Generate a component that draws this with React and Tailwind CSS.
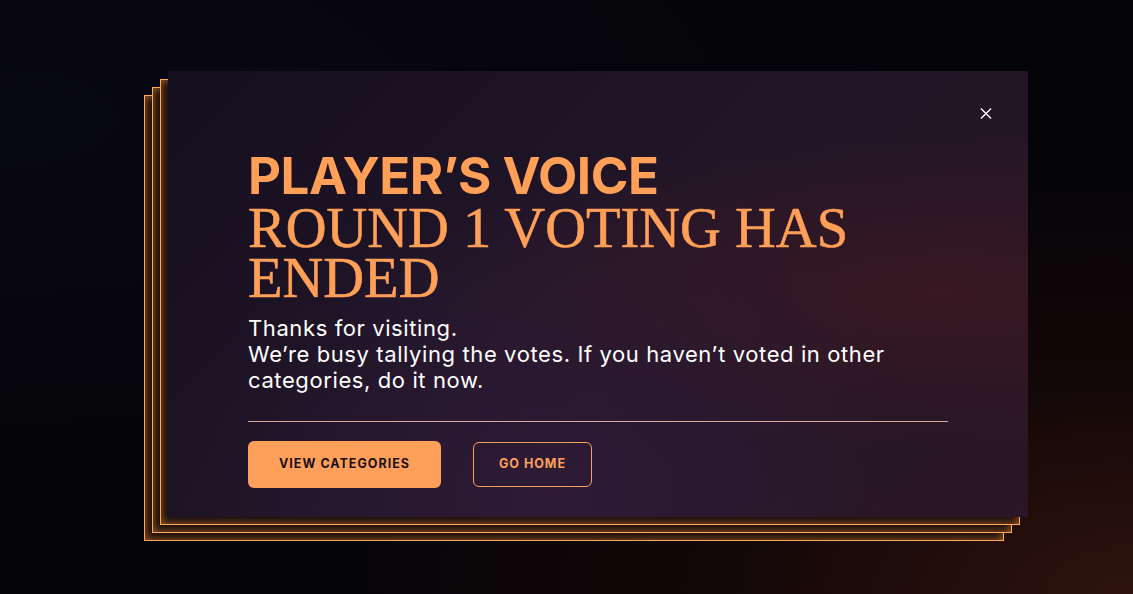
import React from "react";

const frameCls =
  "absolute inset-0 border-[1.5px] border-[#ffa85c] bg-[#1a0e0a] shadow-[inset_0_0_10px_rgba(255,150,70,0.6)]";

export default function App() {
  return (
    <div className="relative h-[594px] w-[1133px] overflow-hidden bg-[#050408] bg-[radial-gradient(ellipse_at_100%_100%,#2e130d_0%,rgba(30,10,8,0.6)_25%,transparent_50%),radial-gradient(ellipse_at_0%_20%,#080814_0%,transparent_50%)] font-['Inter',sans-serif]">
      <div className="pl-[168px] pt-[71px]">
        <div className="relative h-[446px] w-[860px]">
          <div className={frameCls + " translate-x-[-24px] translate-y-[24px]"} />
          <div className={frameCls + " translate-x-[-16px] translate-y-[16px]"} />
          <div className={frameCls + " translate-x-[-8px] translate-y-[8px]"} />
          <div className="relative flex h-full w-full flex-col bg-[#1a1222] bg-[radial-gradient(ellipse_at_45%_95%,#2e1a36_0%,transparent_55%),radial-gradient(ellipse_at_90%_50%,#381822_0%,transparent_50%),linear-gradient(135deg,#150f1e_0%,#211628_50%,#2a1624_100%)] px-[80px] pt-[80px]">
            <button className="absolute right-[36px] top-[36px] flex h-[12px] w-[12px] items-center justify-center text-white">
              <svg width="13" height="13" viewBox="0 0 13 13" fill="none" stroke="white" strokeWidth="1.4">
                <path d="M1 1L12 12M12 1L1 12" />
              </svg>
            </button>
            <h1 className="text-[#ff9f58]">
              <span className="block text-[51px] font-bold leading-[50px] tracking-[-0.5px] font-['Inter',sans-serif]">
                PLAYER’S VOICE
              </span>
              <span className="mt-[2px] block font-['Liberation_Serif',serif] text-[56.5px] leading-[50px] [-webkit-text-stroke:0.6px_#ff9f58]">
                ROUND 1 VOTING HAS
                <br />
                ENDED
              </span>
            </h1>
            <p className="mt-[12px] text-[22px] leading-[26px] tracking-[0.6px] text-white">
              Thanks for visiting.
              <br />
              We’re busy tallying the votes. If you haven’t voted in other
              <br />
              categories, do it now.
            </p>
            <div className="mt-[28px] h-px w-[700px] bg-[#d8a59c]" />
            <div className="mt-[19px] flex items-center gap-[32px]">
              <button className="flex h-[47px] w-[193px] items-center justify-center rounded-[6px] bg-[#ffa05a] text-[12.5px] font-bold tracking-[1px] text-[#1a1018]">
                VIEW CATEGORIES
              </button>
              <button className="flex h-[45px] w-[119px] items-center justify-center rounded-[6px] border border-[#ffa05a] text-[12.5px] font-bold tracking-[1px] text-[#ffa05a]">
                GO HOME
              </button>
            </div>
          </div>
        </div>
      </div>
    </div>
  );
}
